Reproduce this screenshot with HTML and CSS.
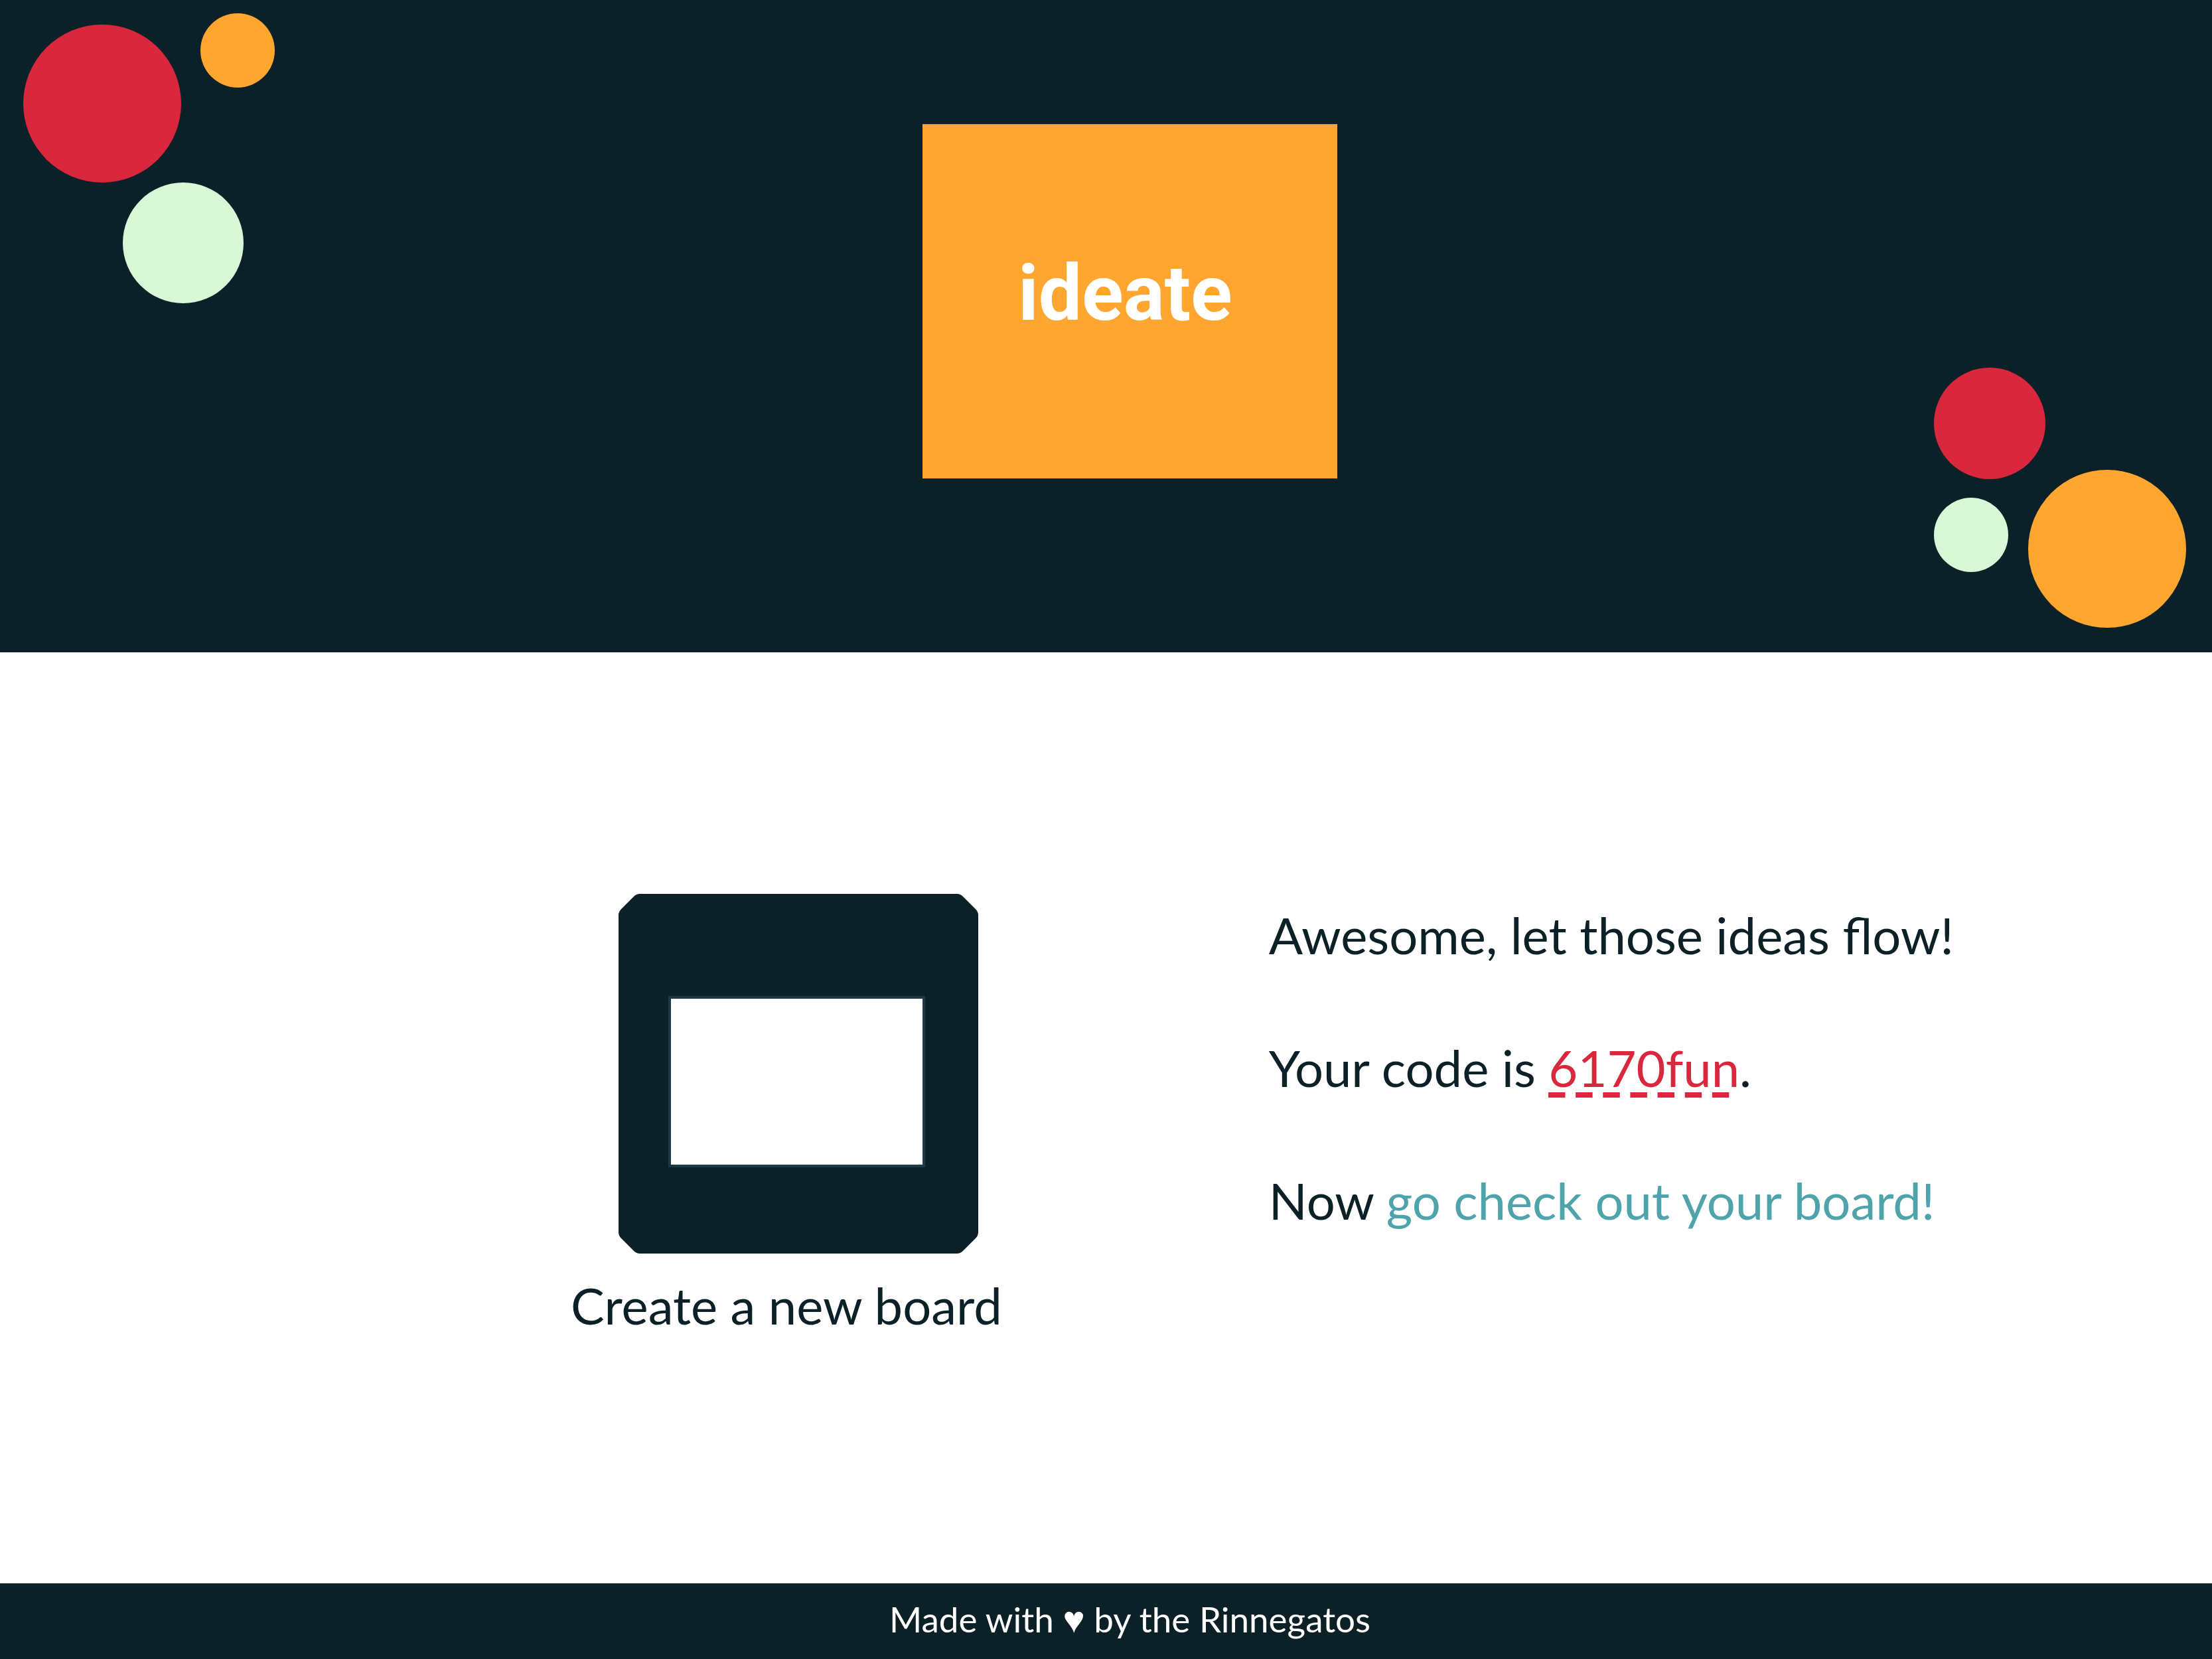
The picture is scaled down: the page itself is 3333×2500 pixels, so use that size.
FILE: index.html
```html
<!DOCTYPE html>
<html lang="en">
<head>
  <meta charset="utf-8">
  <meta name="viewport" content="width=device-width, initial-scale=1">
  <title>ideate</title>
  <link rel="stylesheet" href="styles.css">
</head>
<body>
  <header class="banner">
    <svg class="bubbles bubbles-start" viewBox="0 0 415 457" aria-hidden="true">
      <circle class="red" cx="154" cy="156" r="119"/>
      <circle class="orange" cx="358" cy="76" r="56"/>
      <circle class="mint" cx="276" cy="366" r="91"/>
    </svg>
    <h1 class="logo">ideate</h1>
    <svg class="bubbles bubbles-end" viewBox="0 0 419 429" aria-hidden="true">
      <circle class="red" cx="84" cy="84" r="84"/>
      <circle class="mint" cx="56" cy="252" r="56"/>
      <circle class="orange" cx="261" cy="273" r="119"/>
    </svg>
  </header>

  <main class="content">
    <button class="create" type="button">
      <svg class="create-icon" viewBox="0 0 542 542" aria-hidden="true">
        <path class="tile" d="M32 0H510Q515 0 519 4L538 23Q542 27 542 32V510Q542 515 538 519L519 538Q515 542 510 542H32Q27 542 23 538L4 519Q0 515 0 510V32Q0 27 4 23L23 4Q27 0 32 0Z"/>
        <rect class="sheet" x="77" y="156" width="383" height="254"/>
      </svg>
      <span class="create-label">Create a new board</span>
    </button>
    <div class="message">
      <p>Awesome, let those ideas flow!</p>
      <p>Your code is <span class="code">6170fun</span>.</p>
      <p>Now <a class="board-link" href="#board">go check out your board!</a></p>
    </div>
  </main>

  <footer class="footer">
    <p>Made with <span class="heart">♥</span> by the Rinnegatos</p>
  </footer>
</body>
</html>
```
FILE: styles.css
```css
:root {
  --ink: #0c2027;
  --red: #d9273e;
  --orange: #ffa630;
  --mint: #d7f7d7;
  --teal: #4fa3ab;
}

* {
  box-sizing: border-box;
}

body {
  display: flex;
  flex-direction: column;
  min-height: 100vh;
  margin: 0;
  background: #fff;
  color: var(--ink);
  font-family: Lato, "Open Sans", sans-serif;
  font-size: 76px;
  font-weight: 400;
  line-height: 100px;
}

p {
  margin: 0;
}

.red { fill: var(--red); }
.orange { fill: var(--orange); }
.mint { fill: var(--mint); }

.banner {
  position: relative;
  display: flex;
  justify-content: center;
  padding: 187px 0 262px 72px;
  background: var(--ink);
}

.bubbles {
  position: absolute;
}

.bubbles-start {
  top: 0;
  left: 0;
  width: 415px;
}

.bubbles-end {
  right: 0;
  bottom: 0;
  width: 419px;
}

.logo {
  width: 625px;
  margin: 0;
  padding: 175px 0 199px 144px;
  background: var(--orange);
  color: #fff;
  font-family: Roboto, "Open Sans", sans-serif;
  font-size: 116px;
  font-weight: 700;
  line-height: 160px;
}

.content {
  flex: 1;
  display: grid;
  grid-template-columns: 1051fr 1420fr;
  align-items: start;
  padding: 364px 0 0 25.8%;
}

.create {
  display: flex;
  flex-direction: column;
  align-items: flex-start;
  gap: 28px;
  padding: 0;
  border: 0;
  background: none;
  color: inherit;
  font: inherit;
  cursor: pointer;
}

.create-icon {
  width: 542px;
  margin-left: 72px;
}

.tile {
  fill: var(--ink);
}

.sheet {
  fill: #fff;
  stroke: #1b3947;
  stroke-width: 4px;
}

.message {
  display: flex;
  flex-direction: column;
  gap: 100px;
  padding-top: 12px;
}

.code {
  background: linear-gradient(90deg, var(--red) 25px, transparent 25px) left bottom / 41px 8px round no-repeat;
  color: var(--red);
}

.board-link {
  color: var(--teal);
  text-decoration: none;
}

.footer {
  padding: 4px 0 10px 72px;
  background: var(--ink);
  color: #fff;
  font-size: 53px;
  text-align: center;
}

.heart {
  font-family: "DejaVu Sans", sans-serif;
  font-size: 56px;
  font-weight: 300;
  line-height: 1;
}
```
